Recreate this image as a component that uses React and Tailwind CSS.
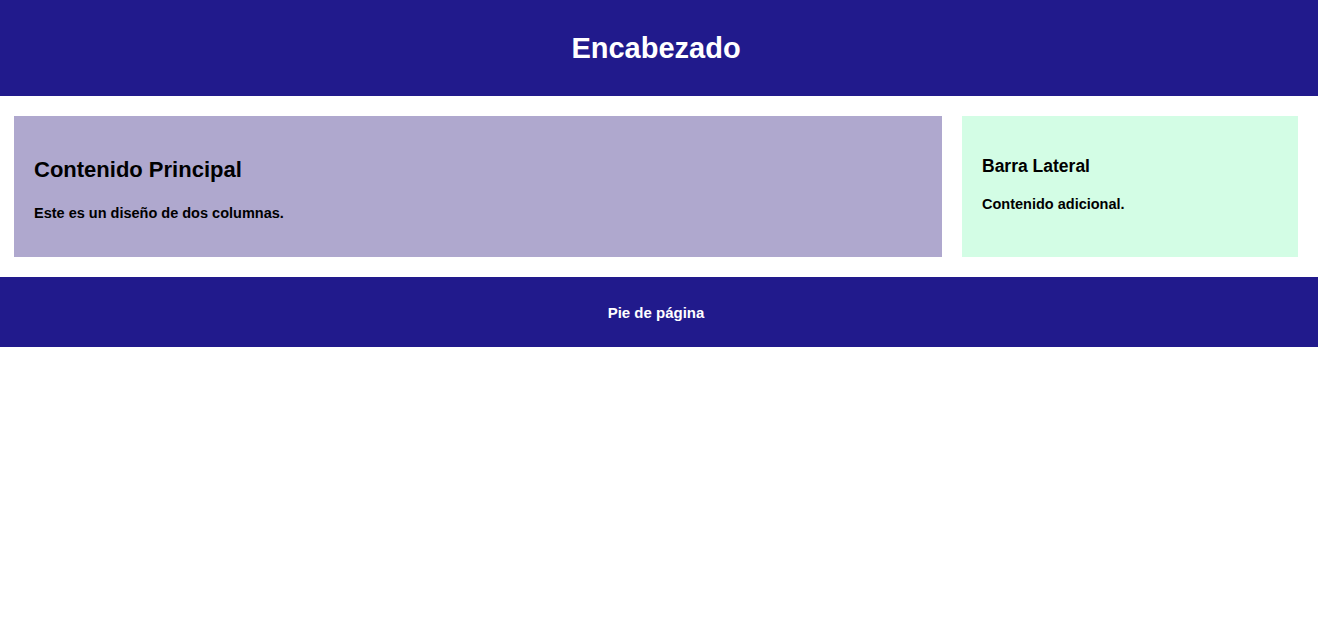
export default function App() {
  return (
    <div className="min-h-screen bg-white text-black font-bold" style={{ fontFamily: '"Liberation Sans", Arial, sans-serif' }}>
      <header className="flex h-24 items-center justify-center bg-[#211a8c] pr-[6px] text-white">
        <h1 className="text-[29px] leading-[34px]">Encabezado</h1>
      </header>

      <div className="flex gap-5 pl-[14px] pr-5 py-5">
        <main className="flex-1 bg-[#afa8ce] p-5">
          <h2 className="mt-5 text-[22px] leading-[28px]">Contenido Principal</h2>
          <p className="mt-[19px] mb-[14px] text-[14.5px] leading-5">Este es un diseño de dos columnas.</p>
        </main>
        <aside className="w-[336px] bg-[#d3fde5] p-5">
          <h3 className="mt-[18px] text-[17.5px] leading-6">Barra Lateral</h3>
          <p className="mt-4 text-[14.5px] leading-5">Contenido adicional.</p>
        </aside>
      </div>

      <footer className="flex h-[70px] items-center justify-center bg-[#211a8c] pr-[6px] text-white">
        <p className="mt-[2px] text-[15px] leading-5">Pie de página</p>
      </footer>
    </div>
  );
}
